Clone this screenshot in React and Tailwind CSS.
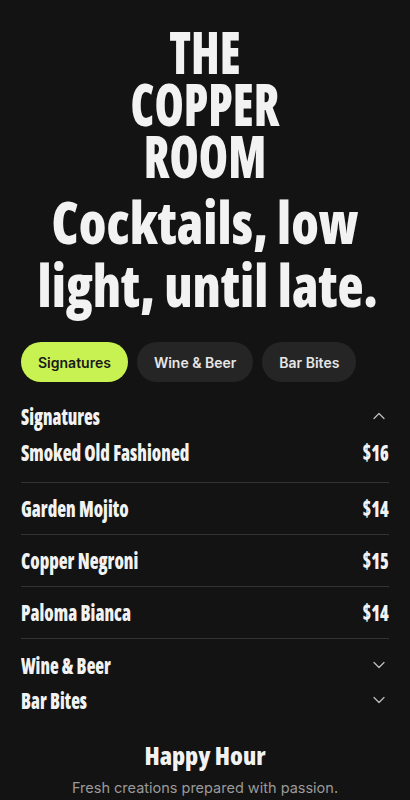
import React, { useState } from "react";
import { ChevronDown, ChevronUp } from "lucide-react";

const condensed =
  "font-['Open_Sans',sans-serif] font-extrabold font-stretch-75%";

const sections = [
  {
    name: "Signatures",
    items: [
      { name: "Smoked Old Fashioned", price: "$16" },
      { name: "Garden Mojito", price: "$14" },
      { name: "Copper Negroni", price: "$15" },
      { name: "Paloma Bianca", price: "$14" },
    ],
  },
  { name: "Wine & Beer", items: [] },
  { name: "Bar Bites", items: [] },
];

const tabs = ["Signatures", "Wine & Beer", "Bar Bites"];

const App = () => {
  const [activeTab, setActiveTab] = useState("Signatures");
  const [open, setOpen] = useState("Signatures");

  return (
    <div className="min-h-[800px] bg-[#131313] text-[#f2f2f2] px-[21px] pb-3">
      {/* Hero */}
      <div className="pt-[25px] text-center">
        <h1 className={`${condensed} scale-x-[0.8] text-[59px] leading-[52px] uppercase`}>
          The
          <br />
          Copper
          <br />
          Room
        </h1>
        <p
          className={`${condensed} mt-[9px] scale-x-[0.91] whitespace-nowrap text-[59px] leading-[63px]`}
        >
          Cocktails, low
          <br />
          light, until late.
        </p>
      </div>

      {/* Tabs */}
      <div className="mt-[26px] flex gap-[9px] font-['Inter',sans-serif] text-[14px] font-semibold">
        {tabs.map((tab) => (
          <button
            key={tab}
            onClick={() => setActiveTab(tab)}
            className={
              activeTab === tab
                ? "h-10 rounded-full bg-[#c8f252] px-[17px] text-[#1a1a1a]"
                : "h-10 rounded-full bg-[#252525] px-[17px] text-[#e6e6e6]"
            }
          >
            {tab}
          </button>
        ))}
      </div>

      {/* Menu sections */}
      <div className="mt-[19px] flex flex-col gap-[5px]">
        {sections.map((section) => {
          const isOpen = open === section.name;
          return (
            <div key={section.name}>
              <button
                onClick={() => setOpen(isOpen ? null : section.name)}
                className="flex h-[30px] w-full items-center justify-between"
              >
                <span
                  className={`${condensed} inline-block origin-left scale-x-[0.82] whitespace-nowrap text-[22px] leading-[30px]`}
                >
                  {section.name}
                </span>
                {isOpen ? (
                  <ChevronUp size={20} strokeWidth={1.5} className="text-[#bdbdbd]" />
                ) : (
                  <ChevronDown size={20} strokeWidth={1.5} className="text-[#bdbdbd]" />
                )}
              </button>
              {isOpen && (
                <ul className="pb-[6px]">
                  {section.items.map((item) => (
                    <li
                      key={item.name}
                      className={`${condensed} flex items-center justify-between border-b border-[#333333] py-[13px] text-[22px] leading-[25px] first:pt-[9px] first:pb-[17px]`}
                    >
                      <span className="inline-block origin-left scale-x-[0.83] whitespace-nowrap">
                        {item.name}
                      </span>
                      <span className="inline-block origin-right scale-x-[0.8]">
                        {item.price}
                      </span>
                    </li>
                  ))}
                </ul>
              )}
            </div>
          );
        })}
      </div>

      {/* Footer */}
      <div className="mt-6 text-center">
        <h2 className={`${condensed} text-[25px] leading-8`}>Happy Hour</h2>
        <p className="mt-[7px] font-['Inter',sans-serif] text-[14.5px] leading-5 text-[#9a9a9a]">
          Fresh creations prepared with passion.
        </p>
      </div>
    </div>
  );
};

export default App;
